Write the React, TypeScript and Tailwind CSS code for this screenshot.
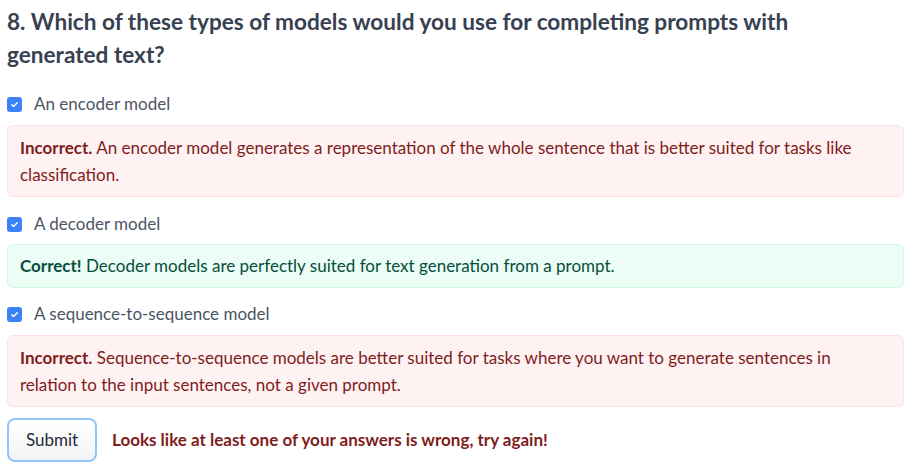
import React from "react";

type Answer = {
  label: string;
  correct: boolean;
  explain: string;
};

const answers: Answer[] = [
  {
    label: "An encoder model",
    correct: false,
    explain:
      "An encoder model generates a representation of the whole sentence that is better suited for tasks like classification.",
  },
  {
    label: "A decoder model",
    correct: true,
    explain: "Decoder models are perfectly suited for text generation from a prompt.",
  },
  {
    label: "A sequence-to-sequence model",
    correct: false,
    explain:
      "Sequence-to-sequence models are better suited for tasks where you want to generate sentences in relation to the input sentences, not a given prompt.",
  },
];

const CheckBox = () => (
  <span className="flex h-[15px] w-[15px] shrink-0 items-center justify-center rounded-[3px] bg-[#3b82f6]">
    <svg viewBox="0 0 16 16" className="h-[11px] w-[11px]" fill="none">
      <path d="M4 8.3l2.6 2.5L12 5.4" stroke="white" strokeWidth="2" strokeLinecap="round" strokeLinejoin="round" />
    </svg>
  </span>
);

export default function App() {
  return (
    <div className="bg-white px-[7px] pt-[5px] font-['Lato',sans-serif] text-[17px]">
      <h2 className="pr-[100px] text-[22.6px] font-bold leading-[33px] text-[#374151]">
        8. Which of these types of models would you use for completing prompts with generated text?
      </h2>
      <div className="mt-[21px] flex flex-col">
        {answers.map((a) => (
          <div key={a.label} className={a.correct ? "mb-[14px] flex flex-col" : "mb-[15px] flex flex-col"}>
            <label className="flex h-[24px] items-center gap-[12px] text-[#4b5563]">
              <CheckBox />
              <span>{a.label}</span>
            </label>
            {a.correct ? (
              <p className="mt-[8px] rounded-md border border-[#d1fae5] bg-[#ecfdf5] px-[12px] py-[8px] leading-[26px] text-[#064e3b]">
                <strong className="font-bold">Correct!</strong> <span>{a.explain}</span>
              </p>
            ) : (
              <p className="mt-[9px] rounded-md border border-[#fee2e2] bg-[#fef2f2] py-[8px] pl-[12px] pr-[40px] leading-[27px] text-[#7f1d1d]">
                <strong className="font-bold">Incorrect.</strong> <span>{a.explain}</span>
              </p>
            )}
          </div>
        ))}
      </div>
      <div className="-mt-[4px] flex items-center gap-[15px]">
        <button className="h-[44px] w-[90px] rounded-lg border-2 border-[#93c5fd] bg-gradient-to-b from-white to-[#f3f4f6] text-[#1f2937]">
          Submit
        </button>
        <span className="font-bold text-[#7f1d1d]">Looks like at least one of your answers is wrong, try again!</span>
      </div>
    </div>
  );
}
